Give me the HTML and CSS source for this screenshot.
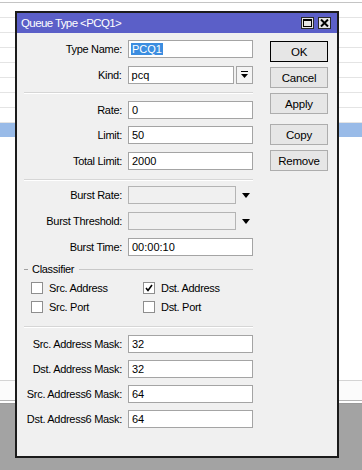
FILE: index.html
```html
<!DOCTYPE html>
<html>

<head>
    <title>Queue Type</title>
    <meta charset="UTF-8" />
    <link rel="stylesheet" href="styles.css">
</head>

<body>
    <div class="desk">
        <div class="list">
            <div class="list-head"></div>
            <div class="list-row"></div>
            <div class="list-row"></div>
            <div class="list-row"></div>
            <div class="list-row"></div>
            <div class="list-row"></div>
            <div class="list-row"></div>
            <div class="list-row"></div>
            <div class="list-row"></div>
            <div class="list-row selected"></div>
        </div>
        <div class="status"></div>
        <div class="workspace"></div>
    </div>

    <div class="dialog">
        <div class="titlebar">
            <span class="title">Queue Type &lt;PCQ1&gt;</span>
            <div class="title-btns">
                <span class="tbtn"><span class="max-icon"></span></span>
                <span class="tbtn">
                    <svg width="9" height="8" viewBox="0 0 9 8"><path d="M1 0.5 L8 7.5 M8 0.5 L1 7.5" stroke="#000" stroke-width="2"/></svg>
                </span>
            </div>
        </div>

        <div class="body">
            <div class="form">
                <div class="row">
                    <label>Type Name:</label>
                    <div class="field"><span class="sel">PCQ1</span></div>
                </div>
                <div class="row nudge">
                    <label>Kind:</label>
                    <div class="field short">pcq</div>
                    <span class="drop-btn">
                        <svg width="7" height="8" viewBox="0 0 7 8"><rect x="0" y="0" width="7" height="1" fill="#000"/><path d="M0 3 L7 3 L3.5 7 Z" fill="#000"/></svg>
                    </span>
                </div>
                <div class="sep first"></div>
                <div class="row">
                    <label>Rate:</label>
                    <div class="field">0</div>
                </div>
                <div class="row">
                    <label>Limit:</label>
                    <div class="field">50</div>
                </div>
                <div class="row nudge">
                    <label>Total Limit:</label>
                    <div class="field">2000</div>
                </div>
                <div class="sep second"></div>
                <div class="row">
                    <label>Burst Rate:</label>
                    <div class="field off"></div>
                    <span class="arrow"></span>
                </div>
                <div class="row nudge">
                    <label>Burst Threshold:</label>
                    <div class="field off"></div>
                    <span class="arrow"></span>
                </div>
                <div class="row nudge">
                    <label>Burst Time:</label>
                    <div class="field">00:00:10</div>
                </div>

                <div class="legend"><span class="dash"></span><span class="legend-text">Classifier</span><span class="legend-line"></span></div>
                <div class="checks">
                    <div class="check-item"><span class="box"></span>Src. Address</div>
                    <div class="check-item"><span class="box">
                        <svg width="8" height="8" viewBox="0 0 8 8"><path d="M1 4 L3 6.5 L7 1" stroke="#000" stroke-width="1.6" fill="none"/></svg>
                    </span>Dst. Address</div>
                    <div class="check-item"><span class="box"></span>Src. Port</div>
                    <div class="check-item"><span class="box"></span>Dst. Port</div>
                </div>
                <div class="sep third"></div>

                <div class="row">
                    <label>Src. Address Mask:</label>
                    <div class="field">32</div>
                </div>
                <div class="row">
                    <label>Dst. Address Mask:</label>
                    <div class="field">32</div>
                </div>
                <div class="row">
                    <label>Src. Address6 Mask:</label>
                    <div class="field">64</div>
                </div>
                <div class="row">
                    <label>Dst. Address6 Mask:</label>
                    <div class="field">64</div>
                </div>
            </div>

            <div class="actions">
                <button class="default">OK</button>
                <button>Cancel</button>
                <button>Apply</button>
                <button class="gap">Copy</button>
                <button>Remove</button>
            </div>
        </div>
    </div>
</body>

</html>
```

FILE: styles.css
```css
body {
    margin: 0;
    width: 362px;
    height: 470px;
    overflow: hidden;
    position: relative;
    background: #fff;
    font-family: "Liberation Sans", Arial, sans-serif;
    font-size: 11px;
    color: #000;
}

/* window behind the dialog */
.desk {
    display: flex;
    flex-direction: column;
    height: 470px;
}

.list {
    flex: 1;
}

.list-head {
    height: 2px;
    border-bottom: 1px solid #c4c4c4;
}

.list-row {
    height: 14px;
    border-bottom: 1px solid #e4e4e4;
}

.list-row.selected {
    background: #99bbe8;
    border-bottom: none;
}

.status {
    height: 19px;
    border-top: 1px solid #d4d4d4;
    border-bottom: 1px solid #b4b4b4;
    box-shadow: 0 2px 0 #fff, 0 3px 0 #9a9a9a;
    background: #fbfbfb;
}

.workspace {
    height: 66px;
    margin-top: 3px;
    background: #a3a3a3;
}

/* dialog */
.dialog {
    position: absolute;
    left: 15px;
    top: 11px;
    width: 324px;
    height: 447px;
    box-sizing: border-box;
    border: 2px solid #1b1b1b;
    background: #f0f0f0;
}

.titlebar {
    height: 20px;
    background: #5b5fc8;
    display: flex;
    align-items: center;
    justify-content: space-between;
    padding: 0 6px 0 4px;
}

.title {
    color: #fff;
    font-size: 11.5px;
    letter-spacing: -0.6px;
}

.title-btns {
    display: flex;
    gap: 4px;
}

.tbtn {
    width: 13px;
    height: 12px;
    box-sizing: border-box;
    border: 1px solid #2a2a2a;
    background: #e6e6e6;
    display: flex;
    align-items: center;
    justify-content: center;
}

.max-icon {
    width: 9px;
    height: 8px;
    box-sizing: border-box;
    border: 1px solid #000;
    border-top-width: 2px;
}

.body {
    display: flex;
    padding: 7px 0 0 7px;
}

.form {
    width: 229px;
    display: flex;
    flex-direction: column;
    gap: 7px;
    letter-spacing: -0.3px;
    white-space: nowrap;
}

.row {
    display: flex;
    align-items: center;
    height: 18px;
}

.row.nudge {
    margin-top: 1px;
}

.row label {
    width: 98px;
    margin-right: 6px;
    text-align: right;
}

.field {
    width: 125px;
    height: 18px;
    box-sizing: border-box;
    border: 1px solid #a4a4a4;
    background: #fff;
    padding: 0 0 0 3px;
    line-height: 16px;
    letter-spacing: 0;
}

.field.short {
    width: 107px;
}

.field.off {
    width: 108px;
    background: #f0f0f0;
    border-color: #b4b4b4;
}

.sel {
    background: #3b8de0;
    color: #fff;
    padding: 0 1px;
    margin-left: -1px;
}

.drop-btn {
    width: 17px;
    height: 18px;
    box-sizing: border-box;
    margin-left: 2px;
    border: 1px solid #a4a4a4;
    background: #f4f4f4;
    display: flex;
    align-items: center;
    justify-content: center;
}

.arrow {
    margin-left: 6px;
    width: 0;
    height: 0;
    border-left: 4.5px solid transparent;
    border-right: 4.5px solid transparent;
    border-top: 5px solid #000;
}

.sep {
    height: 1px;
    background: #d6d6d6;
    border-bottom: 1px solid #fff;
}

.sep.first {
    margin: 1px 0 0 0;
}

.sep.second {
    margin: 2px 0 -2px 0;
}

.sep.third {
    margin: 6px 0 0 0;
}

.legend {
    display: flex;
    align-items: center;
    height: 14px;
    margin-top: -1px;
}

.dash {
    width: 4px;
    height: 1px;
    background: #a0a0a0;
}

.legend-text {
    margin: 0 5px 0 4px;
}

.legend-line {
    flex: 1;
    height: 1px;
    background: #c8c8c8;
}

.checks {
    display: grid;
    grid-template-columns: 112px 1fr;
    row-gap: 7px;
    margin-top: -1px;
    padding: 0 0 0 7px;
}

.check-item {
    display: flex;
    align-items: center;
    height: 12px;
}

.box {
    width: 12px;
    height: 12px;
    box-sizing: border-box;
    border: 1px solid #8e8e8e;
    background: #fff;
    margin-right: 6px;
    display: flex;
    align-items: center;
    justify-content: center;
}

.actions {
    display: flex;
    flex-direction: column;
    gap: 5px;
    margin: 1px 0 0 17px;
}

button {
    width: 58px;
    height: 21px;
    padding: 0;
    font-family: "Liberation Sans", Arial, sans-serif;
    font-size: 11.5px;
    letter-spacing: -0.2px;
    color: #000;
    background: #e6e6e6;
    border: 1px solid #adadad;
    border-radius: 0;
}

button.default {
    border-color: #000;
}

button.gap {
    margin-top: 5px;
}
```
